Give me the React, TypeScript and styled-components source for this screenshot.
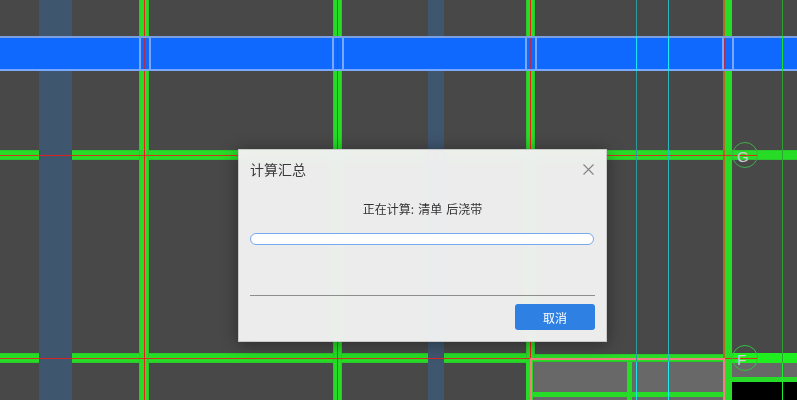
import React from "react";
import styled, { createGlobalStyle } from "styled-components";

const GlobalStyle = createGlobalStyle`
  html, body {
    margin: 0;
    padding: 0;
    background: #484848;
    overflow: hidden;
  }
`;

const Viewport = styled.main`
  position: relative;
  width: 797px;
  height: 400px;
  overflow: hidden;
  background: #484848;
  font-family: "Noto Sans CJK SC", "Noto Sans", sans-serif;
`;

const Canvas = styled.svg`
  display: block;
  width: 797px;
  height: 400px;
`;

const AxisLabel = styled.text`
  font-family: "Liberation Sans", sans-serif;
  font-size: 15px;
  fill: #cfcfcf;
`;

const Dialog = styled.section`
  position: absolute;
  left: 238px;
  top: 149px;
  width: 369px;
  height: 193px;
  box-sizing: border-box;
  padding: 0 11px;
  display: flex;
  flex-direction: column;
  background: rgba(243, 243, 243, 0.96);
  backdrop-filter: blur(5px);
  border: 1px solid #c9c9c9;
  box-shadow: 0 2px 16px rgba(0, 0, 0, 0.4);
  color: #333;
`;

const TitleBar = styled.header`
  height: 38px;
  flex: none;
  display: flex;
  align-items: center;
  justify-content: space-between;
`;

const Title = styled.h1`
  margin: 0;
  font-size: 14px;
  font-weight: 400;
  color: #3a3a3a;
`;

const CloseButton = styled.button`
  width: 11px;
  height: 11px;
  padding: 0;
  margin-right: 1px;
  border: 0;
  background: none;
  display: flex;
  svg {
    display: block;
  }
`;

const Body = styled.div`
  flex: 1;
  display: flex;
  flex-direction: column;
  padding-top: 12px;
`;

const Message = styled.p`
  margin: 0;
  height: 18px;
  line-height: 18px;
  font-size: 12px;
  word-spacing: 1.5px;
  text-align: center;
  color: #333;
`;

const ProgressTrack = styled.div`
  margin-top: 15px;
  width: 344px;
  height: 12px;
  box-sizing: border-box;
  background: #fff;
  border: 1px solid #74aaf0;
  border-radius: 6px;
`;

const Footer = styled.footer`
  flex: none;
  height: 46px;
  box-sizing: border-box;
  border-top: 1px solid #8e8e8e;
  display: flex;
  justify-content: flex-end;
  padding-top: 8px;
`;

const CancelButton = styled.button`
  width: 80px;
  height: 26px;
  padding: 0;
  border: 0;
  border-radius: 3px;
  background: #2f80e3;
  color: #fff;
  font-family: inherit;
  font-size: 12px;
`;

const GREEN = "#27dc27";
const GREEN_EDGE = "#2ac82a";
const RED = "#e8201c";
const PINK = "#f08080";
const SLAB = "#686868";
const COLUMN = "#3f566f";

const verticals = [
  { x: 139, w: 10, red: 144 },
  { x: 333, w: 9, red: 337 },
];
const tints = [
  { x: 39, w: 33 },
  { x: 428, w: 16 },
];
const bandEdges = [139, 149, 332, 342, 525, 535, 722, 732];
const bandReds = [144, 337, 530, 724];

// a green wall with the slightly darker anti-aliased rim of the cad view
function VBeam({ x, w, y = 0, h = 400 }: { x: number; w: number; y?: number; h?: number }) {
  return (
    <>
      <rect x={x} y={y} width={w} height={h} fill={GREEN_EDGE} />
      <rect x={x + 1} y={y} width={w - 2} height={h} fill={GREEN} />
    </>
  );
}

function HBeam({ x, w, y, h }: { x: number; w: number; y: number; h: number }) {
  return (
    <>
      <rect x={x} y={y} width={w} height={h} fill={GREEN_EDGE} />
      <rect x={x} y={y + 1} width={w} height={h - 2} fill={GREEN} />
    </>
  );
}

function Drawing() {
  return (
    <Canvas viewBox="0 0 797 400" shapeRendering="crispEdges">
      {/* horizontal beams */}
      <HBeam x={0} w={797} y={150} h={10} />
      <HBeam x={0} w={531} y={353} h={10} />
      <HBeam x={531} w={193} y={354} h={8} />
      <rect x={732} y={353} width={65} height={10} fill="#1fee1f" />

      {/* blue columns */}
      {tints.map((t) => (
        <rect key={t.x} x={t.x} y={0} width={t.w} height={400} fill={COLUMN} />
      ))}

      {/* lower right room */}
      <rect x={533} y={362} width={191} height={38} fill={SLAB} />
      <rect x={627} y={362} width={5} height={38} fill={GREEN} />
      <rect x={533} y={392} width={191} height={5} fill={GREEN} />
      <rect x={732} y={363} width={65} height={14} fill={SLAB} />
      <rect x={732} y={377} width={65} height={5} fill={GREEN} />
      <rect x={732} y={382} width={65} height={18} fill="#000" />

      {/* vertical beams */}
      {verticals.map((v) => (
        <React.Fragment key={v.x}>
          <VBeam x={v.x} w={v.w} />
          <rect x={v.red} y={0} width={1} height={400} fill={RED} />
        </React.Fragment>
      ))}
      <VBeam x={526} w={9} h={358} />
      <rect x={530} y={0} width={1} height={358} fill={RED} />
      <rect x={526} y={358} width={7} height={42} fill={GREEN} />
      <rect x={723} y={0} width={9} height={400} fill={GREEN} />
      <rect x={723} y={0} width={2} height={358} fill="#a8701e" />

      {/* red center lines and the pink outline of the room */}
      <rect x={0} y={155} width={758} height={1} fill={RED} opacity={0.9} />
      <rect x={0} y={358} width={531} height={1} fill={RED} opacity={0.9} />
      <rect x={725} y={358} width={33} height={1} fill={RED} opacity={0.9} />
      <rect x={530} y={358} width={195} height={2} fill={PINK} />
      <rect x={530} y={358} width={2} height={42} fill={PINK} />
      <rect x={723} y={358} width={2} height={42} fill={PINK} />

      {/* thin axis lines */}
      <rect x={636} y={0} width={1} height={400} fill="#2f9a9c" />
      <rect x={668} y={0} width={1} height={400} fill="#26b8bc" />
      <rect x={782} y={0} width={1} height={400} fill="#2fa036" />
      <rect x={636} y={362} width={1} height={38} fill="#19e6ee" />
      <rect x={668} y={362} width={1} height={38} fill="#19f0f4" />
      <rect x={782} y={363} width={1} height={37} fill="#18f030" />

      {/* selected band */}
      <rect x={0} y={36} width={797} height={35} fill="#0f69ff" />
      <rect x={0} y={36} width={797} height={2} fill="#7c9fe0" />
      <rect x={0} y={69} width={797} height={2} fill="#7aa8ff" />
      {bandEdges.map((x) => (
        <rect key={x} x={x} y={38} width={1.5} height={31} fill="#7aa8ff" />
      ))}
      {bandReds.map((x) => (
        <rect key={x} x={x} y={38} width={1} height={31} fill="#d0202a" opacity={0.8} />
      ))}
      <rect x={636} y={36} width={1} height={35} fill="#19e6ee" />
      <rect x={668} y={36} width={1} height={35} fill="#19f0f4" />
      <rect x={782} y={36} width={1} height={35} fill="#18e030" />

      {/* axis bubbles */}
      <g shapeRendering="geometricPrecision">
        <circle cx={745} cy={155} r={12.5} fill="none" stroke="#3fae4a" strokeWidth={1} />
        <circle cx={745} cy={358} r={12.5} fill="none" stroke="#32c23e" strokeWidth={1} />
        <AxisLabel x={737} y={162}>G</AxisLabel>
        <AxisLabel x={737} y={365}>F</AxisLabel>
      </g>
    </Canvas>
  );
}

export default function App() {
  return (
    <Viewport>
      <GlobalStyle />
      <Drawing />
      <Dialog>
        <TitleBar>
          <Title>计算汇总</Title>
          <CloseButton aria-label="关闭">
            <svg width="11" height="11" viewBox="0 0 11 11">
              <path d="M0.5 0.5 L10.5 10.5 M10.5 0.5 L0.5 10.5" stroke="#858585" strokeWidth="1.1" fill="none" />
            </svg>
          </CloseButton>
        </TitleBar>
        <Body>
          <Message>正在计算: 清单 后浇带</Message>
          <ProgressTrack />
        </Body>
        <Footer>
          <CancelButton>取消</CancelButton>
        </Footer>
      </Dialog>
    </Viewport>
  );
}
